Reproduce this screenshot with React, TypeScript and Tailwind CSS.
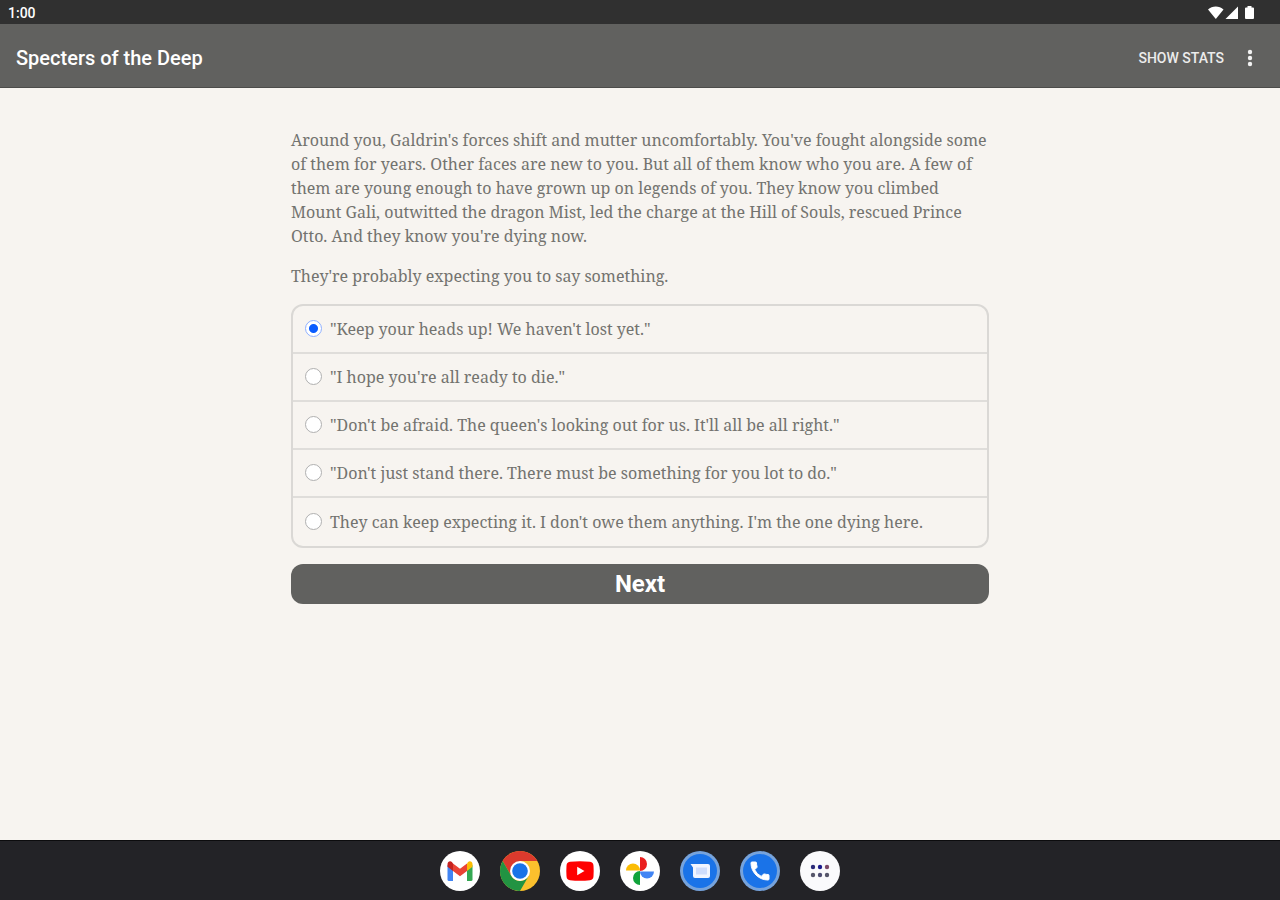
import { useState } from "react";

const choices = [
  "\"Keep your heads up! We haven't lost yet.\"",
  "\"I hope you're all ready to die.\"",
  "\"Don't be afraid. The queen's looking out for us. It'll all be all right.\"",
  "\"Don't just stand there. There must be something for you lot to do.\"",
  "They can keep expecting it. I don't owe them anything. I'm the one dying here.",
];

function StatusBar() {
  return (
    <div className="flex h-6 shrink-0 items-center justify-between bg-[#303030] pt-px pr-6 pl-2 text-white">
      <span className="text-sm font-medium">1:00</span>
      <svg width="48" height="16" viewBox="0 0 48 16" fill="#fff" aria-hidden="true">
        <path d="M0 4.6C4 .6 11.5.6 15.5 4.6L7.800 14Z" />
        <path d="M30 1.6V14H17.500Z" />
        <path d="M38 2.500h1.500V1h4v1.500H45a1 1 0 0 1 1 1V13a1 1 0 0 1-1 1h-7a1 1 0 0 1-1-1V3.500a1 1 0 0 1 1-1Z" />
      </svg>
    </div>
  );
}

function AppBar() {
  return (
    <header className="flex h-16 shrink-0 items-center justify-between border-b border-[#4c4c4a] bg-[#61615f] px-4 pt-1 text-white">
      <h1 className="text-xl font-medium">Specters of the Deep</h1>
      <div className="flex items-center gap-3">
        <button type="button" className="text-sm font-medium text-[#ececec]">
          SHOW STATS
        </button>
        <button type="button" aria-label="More options" className="flex w-7 justify-center">
          <svg width="6" height="18" viewBox="0 0 6 18" fill="#f2f2f2" aria-hidden="true">
            <circle cx="3" cy="3" r="2.200" />
            <circle cx="3" cy="9" r="2.200" />
            <circle cx="3" cy="15" r="2.200" />
          </svg>
        </button>
      </div>
    </header>
  );
}

function Gmail() {
  return (
    <svg viewBox="0 0 40 40" className="size-10" aria-hidden="true">
      <circle cx="20" cy="20" r="20" fill="#fff" />
      <path d="M7.500 14v14.500q0 1.500 1.500 1.500h4V18Z" fill="#4285f4" />
      <path d="M27 18v12h4q1.500 0 1.500-1.500V14Z" fill="#34a853" />
      <path d="M27 12.500V20l5.500-4.200v-2.600c0-2.600-2.600-3.600-4.400-2.200Z" fill="#fbbc04" />
      <path d="M13 20v-7.500l7 5.300 7-5.300V20l-7 5.300Z" fill="#ea4335" />
      <path d="M7.500 13.200v2.600L13 20v-7.500l-1.100-1.500c-1.800-1.400-4.400-.4-4.400 2.200Z" fill="#c5221f" />
    </svg>
  );
}

function Chrome() {
  return (
    <svg viewBox="0 0 40 40" className="size-10" aria-hidden="true">
      <circle cx="20" cy="20" r="20" fill="#fbc02d" />
      <path d="M2.680 10A20 20 0 0 1 37.320 10H20L11.340 25Z" fill="#db3a2d" />
      <path d="M2.680 10A20 20 0 0 0 20 40L28.660 25A10 10 0 0 1 11.340 25Z" fill="#229342" />
      <circle cx="20" cy="20" r="10" fill="#fff" />
      <circle cx="20" cy="20" r="7.800" fill="#1a73e8" />
    </svg>
  );
}

function YouTube() {
  return (
    <svg viewBox="0 0 40 40" className="size-10" aria-hidden="true">
      <circle cx="20" cy="20" r="20" fill="#fff" />
      <path d="M10 10.700q10-1 20 0c2.400.3 3.300 1.500 3.500 4q.4 5.300 0 10.600c-.2 2.500-1.100 3.700-3.500 4q-10 1-20 0c-2.400-.3-3.300-1.500-3.500-4q-.4-5.300 0-10.600c.2-2.500 1.100-3.700 3.500-4Z" fill="#f00" />
      <path d="M17.200 15.800v8.400l7.300-4.200Z" fill="#fff" />
    </svg>
  );
}

function Photos() {
  return (
    <svg viewBox="0 0 40 40" className="size-10" aria-hidden="true">
      <circle cx="20" cy="20" r="20" fill="#fff" />
      <path d="M20 6a7 7 0 0 1 0 14Z" fill="#ea1f1f" />
      <path d="M34 20.500a7 7 0 0 1-14 0Z" fill="#4285f4" />
      <path d="M20 34a7 7 0 0 1 0-14Z" fill="#10a33b" />
      <path d="M6 19.500a7 7 0 0 1 14 0Z" fill="#fbbc04" />
    </svg>
  );
}

function Messages() {
  return (
    <svg viewBox="0 0 40 40" className="size-10" aria-hidden="true">
      <circle cx="20" cy="20" r="20" fill="#76a3dc" />
      <circle cx="20" cy="20" r="17" fill="#1a73e8" />
      <path d="M10.500 13H28q2 0 2 2v10q0 2-2 2H15q-2 0-2-2v-8.500Z" fill="#f1f5ff" />
      <path d="M16 16.500h11v7H16Z" fill="#cfddfc" />
    </svg>
  );
}

function Phone() {
  return (
    <svg viewBox="0 0 40 40" className="size-10" aria-hidden="true">
      <circle cx="20" cy="20" r="20" fill="#76a3dc" />
      <circle cx="20" cy="20" r="17" fill="#1a73e8" />
      <path
        transform="translate(8 8)"
        d="M6.620 10.790a15.150 15.150 0 0 0 6.590 6.590l2.200-2.200a1 1 0 0 1 1.020-.24c1.120.37 2.330.57 3.570.57a1 1 0 0 1 1 1V20a1 1 0 0 1-1 1A17 17 0 0 1 3 4a1 1 0 0 1 1-1h3.500a1 1 0 0 1 1 1c0 1.250.2 2.450.57 3.570a1 1 0 0 1-.25 1.020Z"
        fill="#fff"
        stroke="#fff"
        strokeWidth="1"
      />
    </svg>
  );
}

function AllApps() {
  return (
    <svg viewBox="0 0 40 40" className="size-10" aria-hidden="true">
      <circle cx="20" cy="20" r="20" fill="#fafafc" />
      <circle cx="13" cy="16" r="2.200" fill="#2a2a78" />
      <circle cx="20" cy="16" r="2.200" fill="#1c1c8c" />
      <circle cx="27" cy="16" r="2.200" fill="#7c4a68" />
      <circle cx="13" cy="24" r="2.200" fill="#56566a" />
      <circle cx="20" cy="24" r="2.200" fill="#4e4e72" />
      <circle cx="27" cy="24" r="2.200" fill="#56566a" />
    </svg>
  );
}

const apps = [
  { name: "Gmail", Icon: Gmail },
  { name: "Chrome", Icon: Chrome },
  { name: "YouTube", Icon: YouTube },
  { name: "Photos", Icon: Photos },
  { name: "Messages", Icon: Messages },
  { name: "Phone", Icon: Phone },
  { name: "All apps", Icon: AllApps },
];

export default function App() {
  const [selected, setSelected] = useState(0);

  return (
    <div className="flex min-h-screen flex-col bg-[#f7f4f0] font-[Roboto,sans-serif]">
      <StatusBar />
      <AppBar />
      <main className="flex-1 px-4 py-10">
        <form
          className="mx-auto flex max-w-[698px] flex-col gap-4 font-['Noto_Serif','DejaVu_Serif_Condensed','DejaVu_Serif',serif] text-base text-[#73736f]"
          onSubmit={(e) => e.preventDefault()}
        >
          <p>
            Around you, Galdrin's forces shift and mutter uncomfortably. You've fought alongside some
            of them for years. Other faces are new to you. But all of them know who you are. A few of
            them are young enough to have grown up on legends of you. They know you climbed Mount
            Gali, outwitted the dragon Mist, led the charge at the Hill of Souls, rescued Prince
            Otto. And they know you're dying now.
          </p>
          <p>They're probably expecting you to say something.</p>
          <div className="divide-y-2 divide-[#dfddda] rounded-xl border-2 border-[#dad8d5]">
            {choices.map((choice, i) => (
              <label key={choice} className="flex min-h-12 items-center gap-2 px-3">
                <input
                  type="radio"
                  name="choice"
                  checked={selected === i}
                  onChange={() => setSelected(i)}
                  className="mb-0.5 size-[17px] shrink-0 appearance-none rounded-full border border-[#b0b0b0] bg-white checked:border-[#8fb0ff] checked:bg-[radial-gradient(circle,#0a5cff_4px,#ffffff_5px)]"
                />
                <span>{choice}</span>
              </label>
            ))}
          </div>
          <button
            type="submit"
            className="h-10 rounded-xl bg-[#61615f] font-[Roboto,sans-serif] text-2xl font-bold text-white"
          >
            Next
          </button>
        </form>
      </main>
      <nav aria-label="Apps" className="flex h-15 shrink-0 items-center justify-center gap-5 border-t border-[#0c0c0e] bg-[#232327]">
        {apps.map(({ name, Icon }) => (
          <button key={name} type="button" aria-label={name} className="rounded-full">
            <Icon />
          </button>
        ))}
      </nav>
    </div>
  );
}
